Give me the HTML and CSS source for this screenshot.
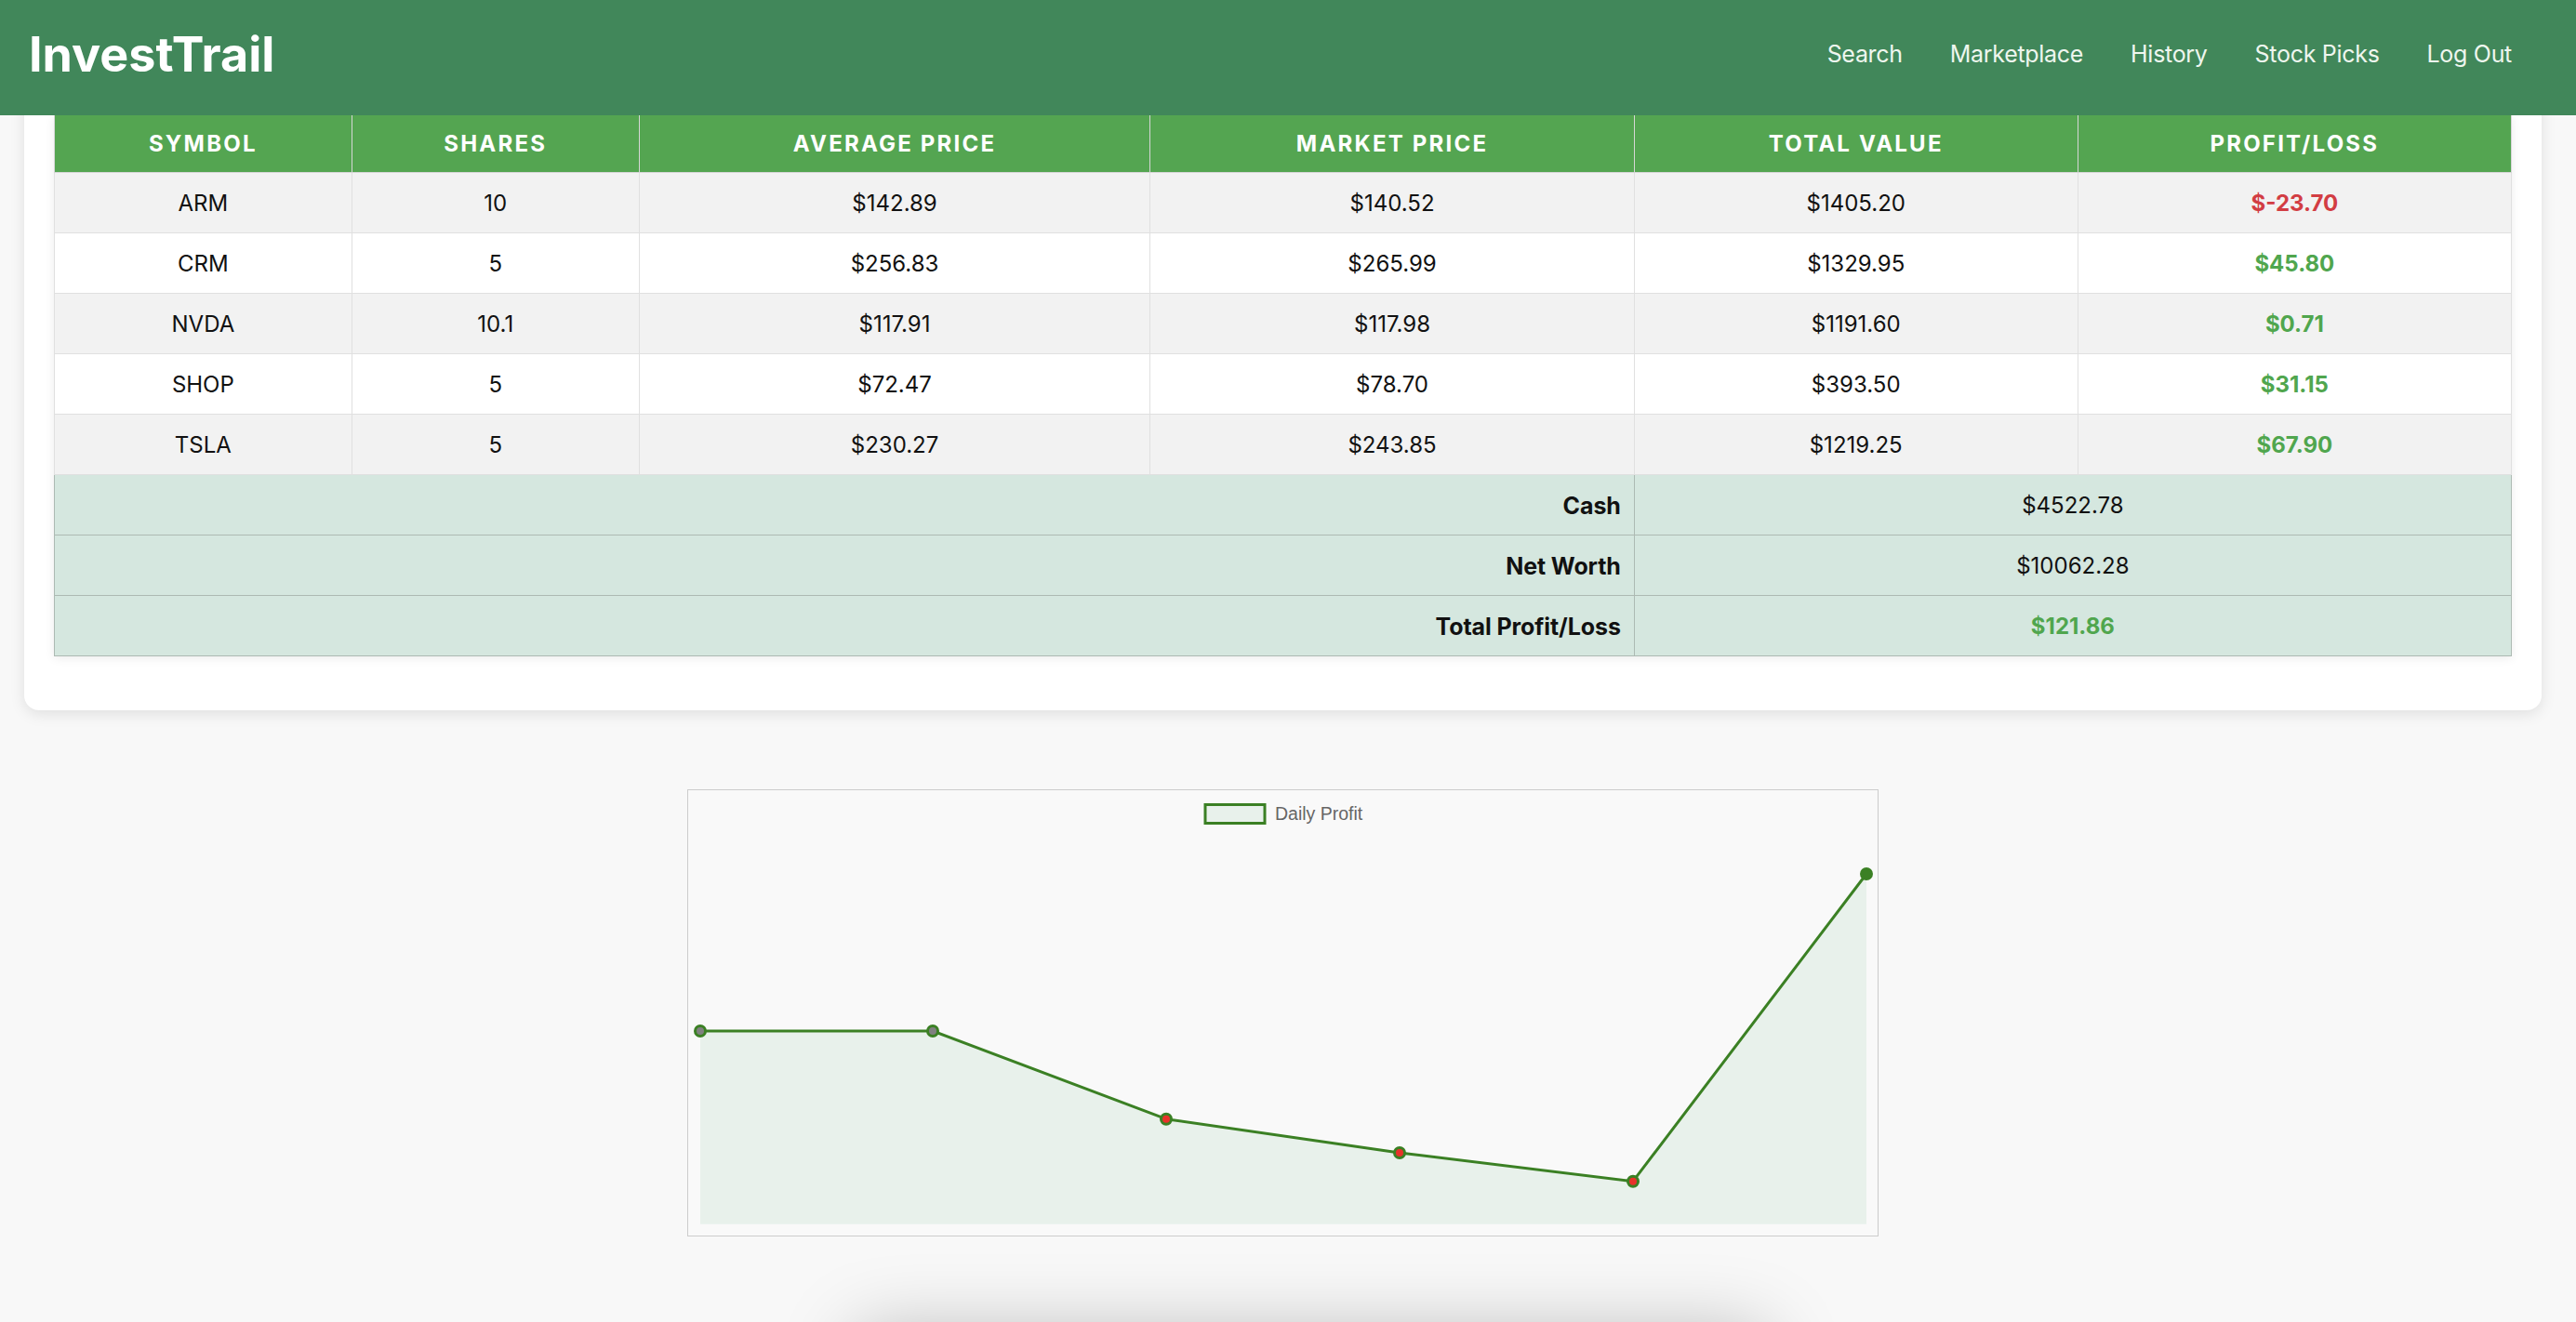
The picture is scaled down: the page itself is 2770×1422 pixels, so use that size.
FILE: index.html
```html
<!DOCTYPE html>
<html lang="en">
<head>
<meta charset="utf-8">
<title>InvestTrail</title>
<link rel="stylesheet" href="styles.css">
</head>
<body>
<header class="topbar">
  <div class="brand">InvestTrail</div>
  <nav class="nav">
    <a href="#">Search</a>
    <a href="#">Marketplace</a>
    <a href="#">History</a>
    <a href="#">Stock Picks</a>
    <a href="#">Log Out</a>
  </nav>
</header>
<main class="page">
  <section class="card">
    <table class="portfolio">
      <colgroup>
        <col class="c-sym"><col class="c-shares"><col class="c-avg"><col class="c-mkt"><col class="c-total"><col class="c-pl">
      </colgroup>
      <thead>
        <tr><th>Symbol</th><th>Shares</th><th>Average Price</th><th>Market Price</th><th>Total Value</th><th>Profit/Loss</th></tr>
      </thead>
      <tbody>
        <tr><td>ARM</td><td>10</td><td>$142.89</td><td>$140.52</td><td>$1405.20</td><td class="loss">$-23.70</td></tr>
        <tr><td>CRM</td><td>5</td><td>$256.83</td><td>$265.99</td><td>$1329.95</td><td class="gain">$45.80</td></tr>
        <tr><td>NVDA</td><td>10.1</td><td>$117.91</td><td>$117.98</td><td>$1191.60</td><td class="gain">$0.71</td></tr>
        <tr><td>SHOP</td><td>5</td><td>$72.47</td><td>$78.70</td><td>$393.50</td><td class="gain">$31.15</td></tr>
        <tr><td>TSLA</td><td>5</td><td>$230.27</td><td>$243.85</td><td>$1219.25</td><td class="gain">$67.90</td></tr>
      </tbody>
      <tfoot>
        <tr><td class="label" colspan="4">Cash</td><td colspan="2">$4522.78</td></tr>
        <tr><td class="label" colspan="4">Net Worth</td><td colspan="2">$10062.28</td></tr>
        <tr><td class="label" colspan="4">Total Profit/Loss</td><td colspan="2" class="gain">$121.86</td></tr>
      </tfoot>
    </table>
  </section>

  <section class="chart-wrap">
    <div class="chart">
      <svg class="chart-svg" width="1279" height="479" viewBox="0 0 1279 479">
        <rect x="556" y="15.5" width="64" height="20" fill="#e8f1eb" stroke="#3b8024" stroke-width="3"/>
        <text x="631" y="32" class="legend-text">Daily Profit</text>
        <polygon points="13,259 263,259 514,353.7 765,390 1016,420.7 1267,90 1267,466.7 13,466.7" fill="#e8f1eb"/>
        <polyline points="13,259 263,259 514,353.7 765,390 1016,420.7 1267,90" fill="none" stroke="#3b8024" stroke-width="3" stroke-linejoin="round"/>
        <circle cx="13" cy="259" r="5.5" fill="#808080" stroke="#3b8024" stroke-width="3"/>
        <circle cx="263" cy="259" r="5.5" fill="#808080" stroke="#3b8024" stroke-width="3"/>
        <circle cx="514" cy="353.7" r="5.5" fill="#e8322a" stroke="#3b8024" stroke-width="3"/>
        <circle cx="765" cy="390" r="5.5" fill="#e8322a" stroke="#3b8024" stroke-width="3"/>
        <circle cx="1016" cy="420.7" r="5.5" fill="#e8322a" stroke="#3b8024" stroke-width="3"/>
        <circle cx="1267" cy="90" r="5.5" fill="#3b8024" stroke="#3b8024" stroke-width="3"/>
      </svg>
    </div>
  </section>

  <section class="next-card"></section>
</main>
</body>
</html>
```

FILE: styles.css
```css
html, body {
  margin: 0;
  padding: 0;
}

body {
  background: #f8f8f8;
  font-family: Inter, "Noto Sans", "Liberation Sans", sans-serif;
  color: #111;
}

.topbar {
  position: fixed;
  top: 0;
  left: 0;
  right: 0;
  height: 124px;
  box-sizing: border-box;
  padding: 0 69px 8px 31px;
  background: #41875a;
  display: flex;
  align-items: center;
  justify-content: space-between;
  z-index: 10;
}

.brand {
  color: #ffffff;
  font-weight: 700;
  font-size: 52px;
  letter-spacing: 0;
}

.nav {
  display: flex;
  gap: 51px;
}

.nav a {
  color: #eef6ee;
  font-size: 25px;
  text-decoration: none;
  letter-spacing: -0.3px;
}

.page {
  padding: 92px 37px 0 26px;
}

.card {
  background: #ffffff;
  border-radius: 16px;
  box-shadow: 0 4px 16px rgba(0, 0, 0, 0.1);
  padding: 32px 32px 58px;
}

.portfolio {
  width: 100%;
  border-collapse: collapse;
  box-shadow: 0 2px 10px rgba(0, 0, 0, 0.08);
  font-size: 24px;
}

.c-sym { width: 12.1%; }
.c-shares { width: 11.7%; }
.c-avg { width: 20.8%; }
.c-mkt { width: 19.7%; }
.c-total { width: 18.05%; }
.c-pl { width: 17.65%; }

.portfolio th {
  background: #54a551;
  color: #ffffff;
  font-weight: 700;
  font-size: 24px;
  letter-spacing: 2.2px;
  text-transform: uppercase;
  line-height: 30px;
  padding: 16px 15px 15px;
  border: 1px solid #d6d6d6;
  border-top: none;
}

.portfolio td {
  text-align: center;
  line-height: 30px;
  padding: 18px 15px 16px;
  border: 1px solid #e0e0e0;
  color: #111;
}

.portfolio tbody tr:nth-child(odd) td {
  background: #f2f2f2;
}

.portfolio tbody tr:nth-child(even) td {
  background: #ffffff;
}

.portfolio tfoot td {
  background: #d5e7df;
  border: 1px solid #adbab3;
}

.portfolio tfoot td.label {
  text-align: right;
  font-weight: 700;
  font-size: 25px;
  padding-right: 14px;
  letter-spacing: -0.1px;
}

.portfolio td.gain {
  color: #50a64e;
  font-weight: 700;
}

.portfolio td.loss {
  color: #d23d43;
  font-weight: 700;
}

.chart-wrap {
  margin-top: 85px;
  display: flex;
  justify-content: center;
}

.chart {
  width: 1279px;
  height: 479px;
  border: 1px solid #cccccc;
  background: #f9f9f9;
}

.chart-svg {
  display: block;
}

.legend-text {
  font-family: "Liberation Sans", Arial, sans-serif;
  font-size: 19.5px;
  fill: #666666;
}

.next-card {
  width: 980px;
  height: 300px;
  margin: 102px 0 0 894px;
  background: #f8f8f8;
  border-radius: 16px;
  box-shadow: 0 0 80px rgba(0, 0, 0, 0.25);
}
```
